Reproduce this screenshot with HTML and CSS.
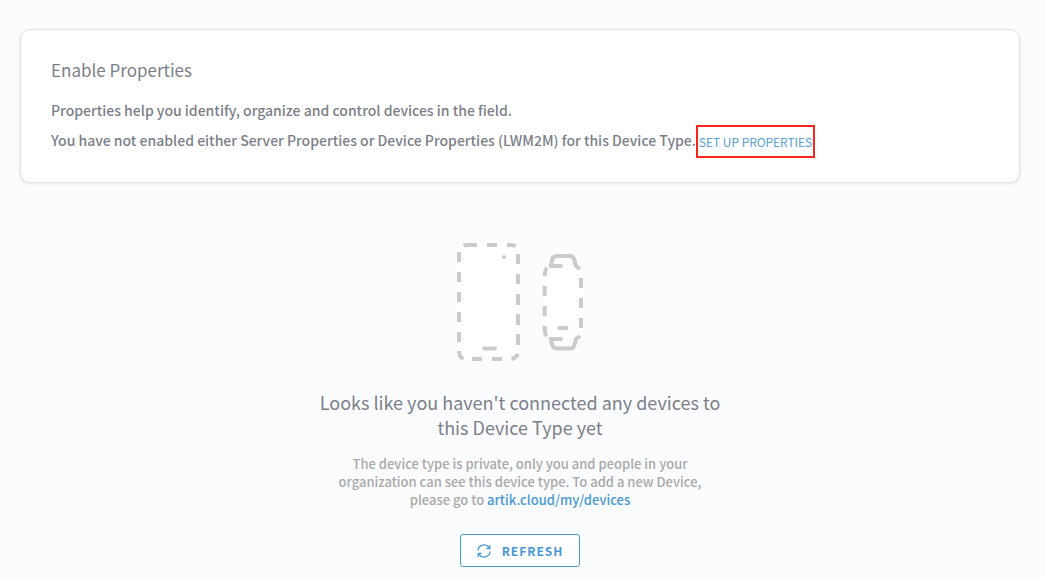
FILE: index.html
```html
<!DOCTYPE html>
<html lang="en">
<head>
<meta charset="utf-8">
<meta name="viewport" content="width=device-width, initial-scale=1">
<title>Device Type Properties</title>
<link rel="stylesheet" href="styles.css">
</head>
<body>
<main class="page">
  <section class="card">
    <h2 class="card-title">Enable Properties</h2>
    <p class="card-text">Properties help you identify, organize and control devices in the field.</p>
    <div class="card-row">
      <p class="card-text">You have not enabled either Server Properties or Device Properties (LWM2M) for this Device Type.</p>
      <a class="setup-link" href="#setup">SET UP PROPERTIES</a>
    </div>
  </section>
  <section class="empty">
    <svg class="devices" viewBox="455 240 130 124" aria-hidden="true">
      <rect x="457" y="243" width="63" height="118" rx="7" fill="#fff"/>
      <path d="M550 266H576L583 273V332L576 339H550L543 332V273Z" fill="#fff"/>
      <g fill="none" stroke="#cbcbcb" stroke-width="4">
        <path d="M463.500 245.500Q465 245 467 245H477M487 245H497M507 245H511Q514 245 515.500 246.500"/>
        <path d="M459 252V262M459 272V282M459 292V302M459 312V322M459 332V342M459 351Q459 357 463.500 359"/>
        <path d="M518 254V264M518 274V284M518 294V305M518 314V325M518 334V345M518 354Q516 358 511.500 359"/>
        <path d="M472 359H482M492 359H502"/>
        <path d="M484 348.500H495" stroke-linecap="round"/>
        <path d="M562.500 266H551L552 260Q553 256 557 256H570Q573 256 574 259L576 266L580 269"/>
        <path d="M562.500 339H551L552 344Q553 348.500 557 348.500H570Q573 348.500 574 346L576 339L580 336"/>
        <path d="M547 268Q544.700 270 544.700 276M544.700 286V296M544.700 306V316M544.700 326V331Q544.700 334 547 336"/>
        <path d="M581 278V288M581 298V308M581 318V328"/>
        <path d="M559.500 328H566.500" stroke-linecap="round"/>
      </g>
      <circle cx="504" cy="257" r="2" fill="#cbcbcb"/>
    </svg>
    <h1 class="empty-title">Looks like you haven't connected any devices to this Device Type yet</h1>
    <p class="empty-text">The device type is private, only you and people in your organization can see this device type. To add a new Device, please go to <a class="empty-link" href="#devices">artik.cloud/my/devices</a></p>
    <button class="refresh" type="button">
      <svg class="refresh-icon" viewBox="0 0 14 14" aria-hidden="true">
        <g fill="none" stroke="currentColor" stroke-width="1.300">
          <path d="M1 6.500A6 6 0 0 1 12 3.700M13 7.500A6 6 0 0 1 2 10.300"/>
          <path d="M12.800 1V4.500H9.300M1.200 13V9.500H4.700"/>
        </g>
      </svg>
      <span>REFRESH</span>
    </button>
  </section>
</main>
</body>
</html>
```
FILE: styles.css
```css
* {
  box-sizing: border-box;
}

body {
  margin: 0;
  background: #fbfcfe;
  color: #7b7f89;
  font-family: "Noto Sans CJK SC", "Noto Sans", sans-serif;
  font-weight: 500;
}

h1, h2, p {
  margin: 0;
  font-weight: inherit;
}

a {
  color: #4898d3;
  text-decoration: none;
}

.page {
  padding: 29px 26px 10px 20px;
}

.card {
  padding: 25px 30px 24px;
  background: #fff;
  border: 1px solid #e0e2e5;
  border-radius: 10px;
  box-shadow: 0 1px 3px rgba(0, 0, 0, 0.1);
}

.card-title {
  margin-bottom: 10px;
  font-size: 17px;
  font-weight: 400;
  line-height: 30px;
}

.card-text {
  font-size: 14px;
  line-height: 30px;
}

.card-row {
  display: flex;
  align-items: flex-start;
}

.setup-link {
  flex: none;
  padding: 0 1px;
  border: 2px solid #f8261c;
  font-size: 12px;
  font-weight: 350;
  line-height: 29px;
}

.empty {
  display: flex;
  flex-direction: column;
  align-items: center;
  padding-top: 57px;
  text-align: center;
}

.devices {
  width: 130px;
  height: 124px;
}

.empty-title {
  max-width: 420px;
  margin-top: 26px;
  font-size: 18px;
  font-weight: 400;
  line-height: 25px;
}

.empty-text {
  max-width: 380px;
  margin-top: 15px;
  color: #a9a9a9;
  font-size: 13px;
  line-height: 18px;
}

.empty-link {
  display: inline-block;
}

.refresh {
  display: flex;
  align-items: center;
  justify-content: center;
  gap: 11px;
  width: 120px;
  height: 33px;
  margin-top: 25px;
  padding: 0;
  background: #fff;
  border: 1px solid #4898d3;
  border-radius: 3px;
  color: #4898d3;
  font-family: inherit;
  font-size: 12px;
  font-weight: 700;
  letter-spacing: 1px;
}

.refresh-icon {
  width: 14px;
  height: 14px;
}
```
